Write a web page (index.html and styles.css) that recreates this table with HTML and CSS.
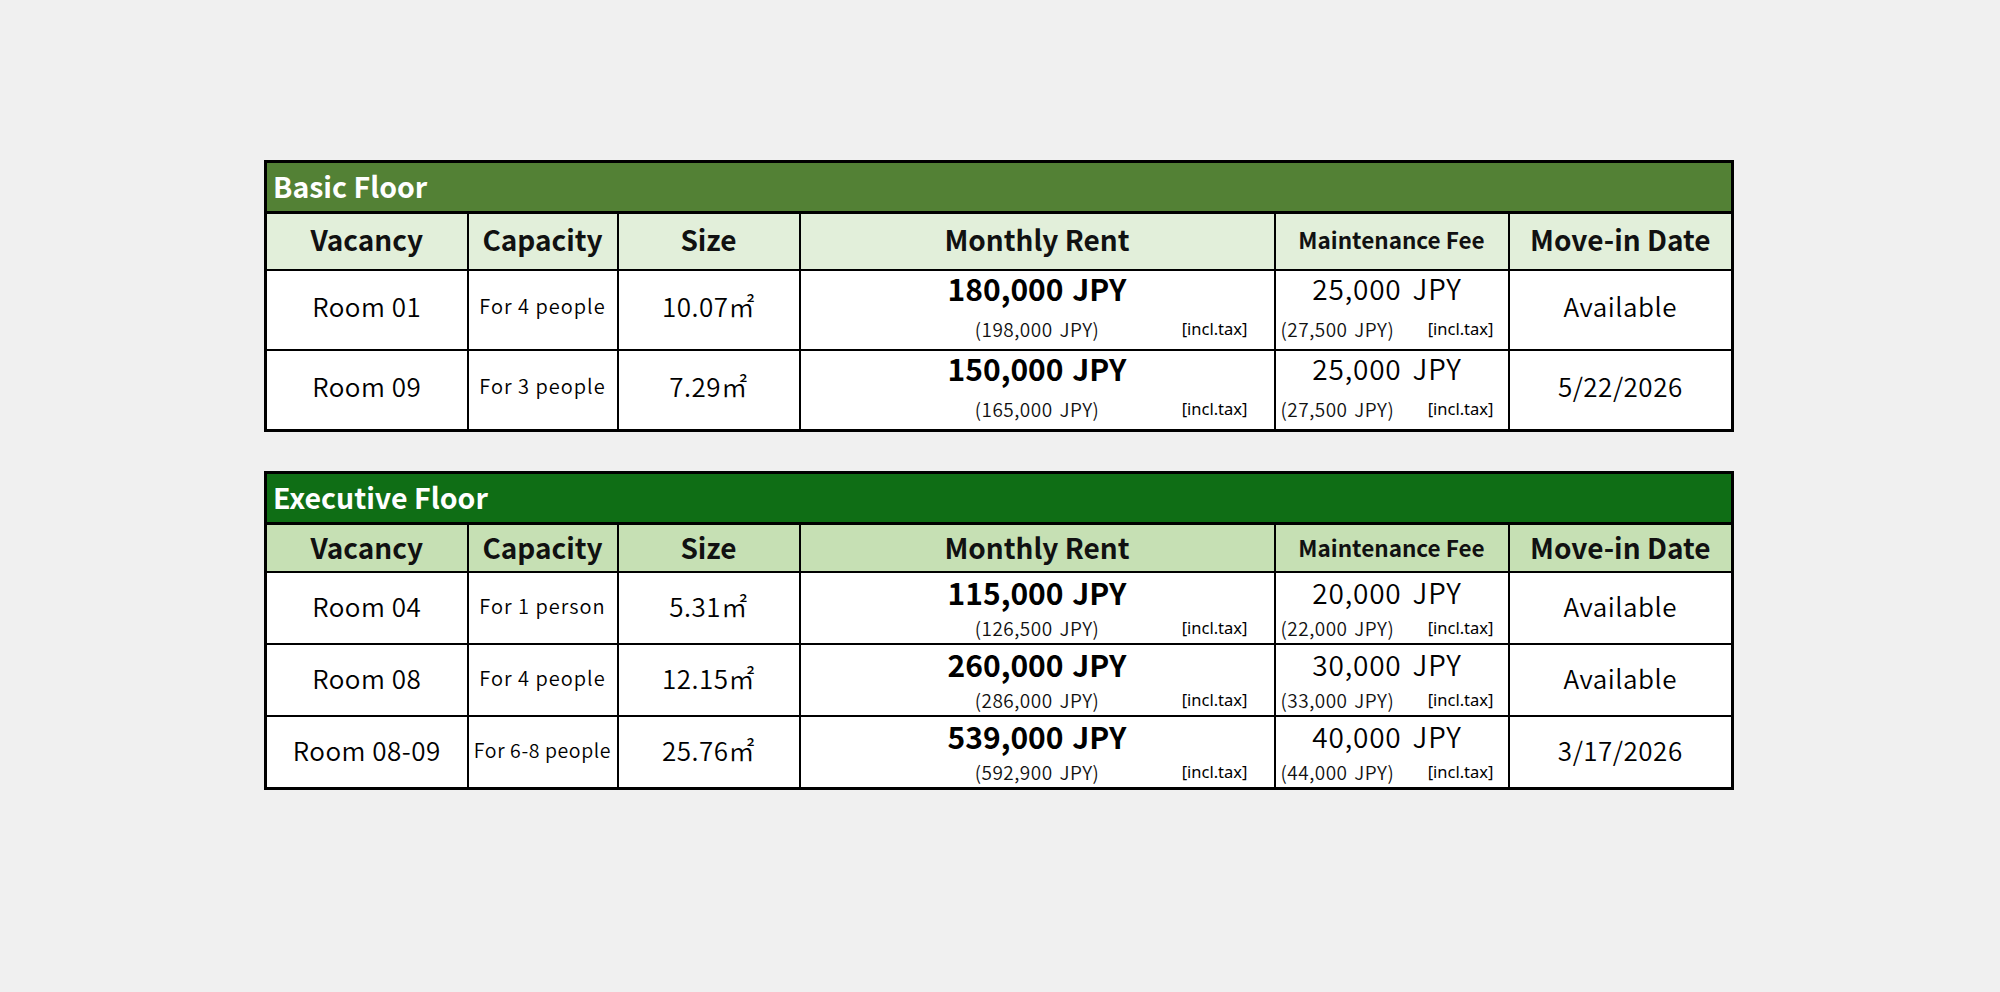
FILE: index.html
```html
<!DOCTYPE html>
<html lang="en">
<head>
<meta charset="utf-8">
<title>Floor Vacancies</title>
<link rel="stylesheet" href="styles.css">
</head>
<body>
<main class="page">
  <table class="floor floor-basic">
    <colgroup>
      <col class="c-vac"><col class="c-cap"><col class="c-size"><col class="c-rent"><col class="c-fee"><col class="c-date">
    </colgroup>
    <thead>
      <tr class="title-row"><th colspan="6" class="title">Basic Floor</th></tr>
      <tr class="head-row">
        <th>Vacancy</th><th>Capacity</th><th>Size</th><th>Monthly Rent</th><th class="fee-head">Maintenance Fee</th><th>Move-in Date</th>
      </tr>
    </thead>
    <tbody>
      <tr>
        <td class="room">Room 01</td>
        <td class="cap">For 4 people</td>
        <td class="size">10.07㎡</td>
        <td class="rent"><div class="main">180,000 JPY</div><div class="sub"><span class="ex">(198,000 JPY)</span><span class="incl">[incl.tax]</span></div></td>
        <td class="fee"><div class="main">25,000 JPY</div><div class="sub"><span class="ex">(27,500 JPY)</span><span class="incl">[incl.tax]</span></div></td>
        <td class="date">Available</td>
      </tr>
      <tr>
        <td class="room">Room 09</td>
        <td class="cap">For 3 people</td>
        <td class="size">7.29㎡</td>
        <td class="rent"><div class="main">150,000 JPY</div><div class="sub"><span class="ex">(165,000 JPY)</span><span class="incl">[incl.tax]</span></div></td>
        <td class="fee"><div class="main">25,000 JPY</div><div class="sub"><span class="ex">(27,500 JPY)</span><span class="incl">[incl.tax]</span></div></td>
        <td class="date">5/22/2026</td>
      </tr>
    </tbody>
  </table>

  <table class="floor floor-exec">
    <colgroup>
      <col class="c-vac"><col class="c-cap"><col class="c-size"><col class="c-rent"><col class="c-fee"><col class="c-date">
    </colgroup>
    <thead>
      <tr class="title-row"><th colspan="6" class="title">Executive Floor</th></tr>
      <tr class="head-row">
        <th>Vacancy</th><th>Capacity</th><th>Size</th><th>Monthly Rent</th><th class="fee-head">Maintenance Fee</th><th>Move-in Date</th>
      </tr>
    </thead>
    <tbody>
      <tr>
        <td class="room">Room 04</td>
        <td class="cap">For 1 person</td>
        <td class="size">5.31㎡</td>
        <td class="rent"><div class="main">115,000 JPY</div><div class="sub"><span class="ex">(126,500 JPY)</span><span class="incl">[incl.tax]</span></div></td>
        <td class="fee"><div class="main">20,000 JPY</div><div class="sub"><span class="ex">(22,000 JPY)</span><span class="incl">[incl.tax]</span></div></td>
        <td class="date">Available</td>
      </tr>
      <tr>
        <td class="room">Room 08</td>
        <td class="cap">For 4 people</td>
        <td class="size">12.15㎡</td>
        <td class="rent"><div class="main">260,000 JPY</div><div class="sub"><span class="ex">(286,000 JPY)</span><span class="incl">[incl.tax]</span></div></td>
        <td class="fee"><div class="main">30,000 JPY</div><div class="sub"><span class="ex">(33,000 JPY)</span><span class="incl">[incl.tax]</span></div></td>
        <td class="date">Available</td>
      </tr>
      <tr>
        <td class="room">Room 08-09</td>
        <td class="cap cap-narrow">For 6-8 people</td>
        <td class="size">25.76㎡</td>
        <td class="rent"><div class="main">539,000 JPY</div><div class="sub"><span class="ex">(592,900 JPY)</span><span class="incl">[incl.tax]</span></div></td>
        <td class="fee"><div class="main">40,000 JPY</div><div class="sub"><span class="ex">(44,000 JPY)</span><span class="incl">[incl.tax]</span></div></td>
        <td class="date">3/17/2026</td>
      </tr>
    </tbody>
  </table>
</main>
</body>
</html>
```

FILE: styles.css
```css
html, body {
  margin: 0;
  padding: 0;
  background: #f0f0f0;
}

.page {
  padding: 160px 0 0 264px;
  display: flex;
  flex-direction: column;
  gap: 39px;
  font-family: "Noto Sans CJK JP", "Noto Sans", sans-serif;
  color: #000;
}

.floor {
  border-collapse: collapse;
  table-layout: fixed;
  width: 1467px;
  background: #fff;
  border: 3px solid #000;
}

.c-vac { width: 202px; }
.c-cap { width: 150px; }
.c-size { width: 182px; }
.c-rent { width: 475px; }
.c-fee { width: 234px; }
.c-date { width: 224px; }

.floor th,
.floor td {
  border: 2px solid #000;
  padding: 0;
  text-align: center;
  vertical-align: middle;
  white-space: nowrap;
}

.title-row th {
  border-bottom-width: 3px;
}

.floor .title {
  height: 44px;
  text-align: left;
  padding: 0 0 4px 6px;
  color: #fff;
  font-size: 28.5px;
  font-weight: 700;
}

.floor-basic .title { background: #538135; }
.floor-exec .title { background: #0f6e15; }

.head-row th {
  font-size: 28px;
  font-weight: 700;
  color: #111;
}
.floor-basic .head-row th { background: #e2efda; height: 49px; padding-bottom: 6px; }
.floor-exec .head-row th { background: #c6e0b4; height: 43px; padding-bottom: 3px; }

.head-row .fee-head { font-size: 22.5px; }

.floor-basic tbody td { height: 68px; padding-bottom: 10px; }
.floor-exec tbody td { height: 65px; padding-bottom: 5px; }

.room, .size, .date {
  font-size: 26px;
  font-weight: 350;
  letter-spacing: 0.5px;
}
.cap {
  font-size: 20px;
  font-weight: 350;
  letter-spacing: 1px;
}
.cap-narrow {
  font-size: 19.5px;
  letter-spacing: 0.6px;
}

.floor .rent, .floor .fee {
  vertical-align: top;
}

.main {
  line-height: 34px;
  height: 34px;
  word-spacing: 2px;
}
.floor-exec .main {
  padding-top: 2px;
}
.rent .main {
  font-size: 30px;
  font-weight: 700;
}
.fee .main {
  font-size: 28px;
  font-weight: 350;
  letter-spacing: 0.8px;
  word-spacing: 4px;
}

.sub {
  line-height: 24px;
  margin-top: 12px;
}
.floor-exec .sub {
  margin-top: 7px;
}

.ex {
  font-size: 19px;
  font-weight: 350;
  letter-spacing: 0.5px;
  word-spacing: 2px;
  color: #111;
}
.incl {
  font-family: "Noto Sans", "Open Sans", sans-serif;
  font-size: 16.5px;
  color: #000;
}

.floor .rent {
  padding: 0 26px 0 26px;
}
.rent .sub {
  display: grid;
  grid-template-columns: 1fr auto 1fr;
  align-items: end;
}
.rent .ex { grid-column: 2; }
.rent .incl { grid-column: 3; justify-self: end; }

.floor .fee {
  padding: 0 14px 0 5px;
}
.fee .sub {
  display: flex;
  justify-content: space-between;
  align-items: end;
}
```
